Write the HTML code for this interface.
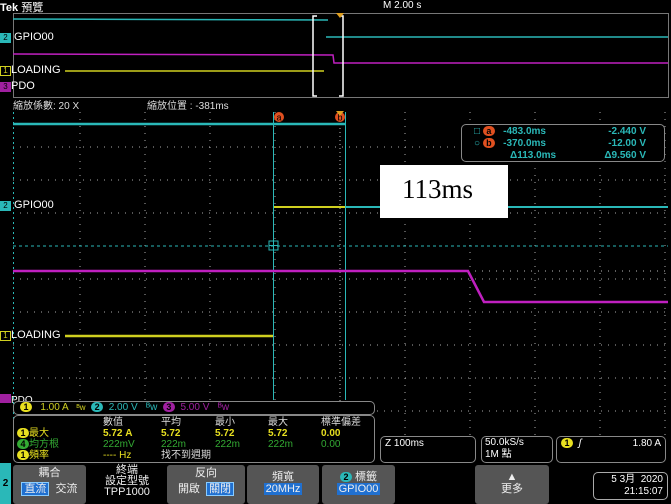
<!DOCTYPE html>
<html><head><meta charset="utf-8"><style>
*{margin:0;padding:0;box-sizing:border-box}
body{width:671px;height:504px;background:#000;position:relative;overflow:hidden;font-family:"Liberation Sans","Noto Sans CJK TC",sans-serif;color:#fff;font-size:10px}
.a{position:absolute;white-space:nowrap}
.btn{position:absolute;top:465px;height:39px;background:#555;border-radius:3px;text-align:center;font-size:11px;color:#eee;line-height:12px;padding-top:2px}
.box{position:absolute;border:1px solid #888;border-radius:5px}
.c{display:inline-block;width:12px;height:10px;border-radius:6px;text-align:center;line-height:10px;font-size:9px;font-weight:bold;color:#000}
</style></head><body>
<svg width="671" height="504" style="position:absolute;left:0;top:0">
<rect x="13.5" y="13.5" width="655" height="84" fill="none" stroke="#777"/>
<line x1="13" y1="19" x2="328" y2="20" stroke="#2ab8b8" stroke-width="1.5"/>
<line x1="326" y1="37" x2="668" y2="37" stroke="#2ab8b8" stroke-width="1.5"/>
<polyline points="13,54 333,55 334,63 668,63" fill="none" stroke="#c020c0" stroke-width="1.5"/>
<line x1="65" y1="71" x2="324" y2="71" stroke="#d0d020" stroke-width="1.5"/>
<polyline points="317,16 313,16 313,96 317,96" fill="none" stroke="#fff" stroke-width="1.5"/>
<polyline points="339,16 343,16 343,96 339,96" fill="none" stroke="#fff" stroke-width="1.5"/>
<polygon points="336,13 344,13 340,18" fill="#e0a020"/>
<g stroke="#aaa" stroke-width="1" stroke-dasharray="1,6">
<line x1="80" y1="112" x2="80" y2="440"/><line x1="145" y1="112" x2="145" y2="440"/><line x1="210" y1="112" x2="210" y2="440"/><line x1="275" y1="112" x2="275" y2="440"/><line x1="405" y1="112" x2="405" y2="440"/><line x1="470" y1="112" x2="470" y2="440"/><line x1="535" y1="112" x2="535" y2="440"/><line x1="600" y1="112" x2="600" y2="440"/><line x1="665" y1="112" x2="665" y2="440"/>
<line x1="13" y1="147" x2="668" y2="147"/><line x1="13" y1="180" x2="668" y2="180"/><line x1="13" y1="213" x2="668" y2="213"/><line x1="13" y1="279" x2="668" y2="279"/><line x1="13" y1="312" x2="668" y2="312"/><line x1="13" y1="345" x2="668" y2="345"/><line x1="13" y1="378" x2="668" y2="378"/><line x1="13" y1="411" x2="668" y2="411"/>
</g>
<line x1="340" y1="112" x2="340" y2="440" stroke="#bbb" stroke-dasharray="1,3"/>
<line x1="13" y1="271" x2="668" y2="271" stroke="#bbb" stroke-dasharray="1,6"/>
<line x1="13.5" y1="112" x2="13.5" y2="440" stroke="#2ab8b8" stroke-dasharray="2,3"/>
<line x1="13" y1="246" x2="668" y2="246" stroke="#2ab8b8" stroke-dasharray="3,3"/>
<line x1="273.5" y1="112" x2="273.5" y2="400" stroke="#2ab8b8"/>
<line x1="345.5" y1="112" x2="345.5" y2="400" stroke="#2ab8b8"/>
<rect x="269" y="241" width="9" height="9" fill="none" stroke="#2ab8b8"/>
<line x1="273.5" y1="241" x2="273.5" y2="250" stroke="#2ab8b8"/><line x1="269" y1="245.5" x2="278" y2="245.5" stroke="#2ab8b8"/>
<circle cx="279" cy="117" r="5" fill="#e05020"/><circle cx="340" cy="117" r="5" fill="#e05020"/>
<text x="279" y="120.5" font-size="9" fill="#000" text-anchor="middle" font-family="Liberation Sans">a</text>
<text x="340" y="120.5" font-size="9" fill="#000" text-anchor="middle" font-family="Liberation Sans">b</text>
<polygon points="336,111 344,111 340,116" fill="#e0a020"/>
<line x1="13" y1="124" x2="345" y2="124" stroke="#2ab8b8" stroke-width="2.5"/>
<line x1="274" y1="207" x2="345" y2="207" stroke="#d0d020" stroke-width="2"/>
<line x1="345" y1="207" x2="668" y2="207" stroke="#2ab8b8" stroke-width="2"/>
<polyline points="13,271 468,271 484,302 668,302" fill="none" stroke="#c020c0" stroke-width="2.5"/>
<line x1="65" y1="336" x2="273" y2="336" stroke="#d0d020" stroke-width="2.5"/>
</svg>
<div class="a" style="left:0;top:-1px;font-size:11px;font-weight:bold">Tek <span style="font-weight:normal">預覽</span></div>
<div class="a" style="left:383px;top:0;font-size:10px">M 2.00 s</div>
<div class="a" style="left:0;top:31px;font-size:11px"><span style="display:inline-block;width:11px;height:10px;background:#2ab8b8;color:#000;font-size:8px;text-align:center;line-height:10px">2</span> GPIO00</div>
<div class="a" style="left:0;top:64px;font-size:11px"><span style="display:inline-block;width:11px;height:10px;border:1px solid #d0d020;color:#d0d020;font-size:8px;text-align:center;line-height:8px">1</span>LOADING</div>
<div class="a" style="left:0;top:80px;font-size:11px"><span style="display:inline-block;width:11px;height:10px;background:#a020a0;color:#000;font-size:8px;text-align:center;line-height:10px">3</span>PDO</div>
<div class="a" style="left:13px;top:97px;font-size:10px;color:#ddd">縮放係數: 20 X</div>
<div class="a" style="left:147px;top:97px;font-size:10px;color:#ddd">縮放位置 : -381ms</div>
<div class="a" style="left:0;top:199px;font-size:11px"><span style="display:inline-block;width:11px;height:10px;background:#2ab8b8;color:#000;font-size:8px;text-align:center;line-height:10px">2</span> GPIO00</div>
<div class="a" style="left:0;top:329px;font-size:11px"><span style="display:inline-block;width:11px;height:10px;border:1px solid #d0d020;color:#d0d020;font-size:8px;text-align:center;line-height:8px">1</span>LOADING</div>
<div class="a" style="left:0;top:394px;font-size:10px"><span style="display:inline-block;width:11px;height:9px;background:#a020a0"></span>PDO</div>
<div class="box" style="left:461px;top:124px;width:204px;height:38px;background:#000;color:#2ab8b8;font-size:10px;font-weight:bold;line-height:12px;padding:1px 0 0 12px">
<div>□ <span class="c" style="background:#e05020">a</span> &nbsp;&nbsp;-483.0ms<span style="position:absolute;right:18px">-2.440 V</span></div>
<div>○ <span class="c" style="background:#e05020">b</span> &nbsp;&nbsp;-370.0ms<span style="position:absolute;right:18px">-12.00 V</span></div>
<div style="padding-left:36px">Δ113.0ms<span style="position:absolute;right:18px">Δ9.560 V</span></div>
</div>
<div class="a" style="left:380px;top:165px;width:128px;height:53px;background:#fff;color:#000;font-family:'Liberation Serif',serif;font-size:27px;padding:9px 0 0 22px">113ms</div>
<div class="box" style="left:13px;top:401px;width:362px;height:14px;background:#000;font-size:10px;line-height:12px;padding-left:6px;color:#d0d020"><span class="c" style="background:#e8e020">1</span>&nbsp;&nbsp; 1.00 A &nbsp;&nbsp;<span style="font-size:8px">ᴮw</span>&nbsp; <span class="c" style="background:#2ab8b8">2</span>&nbsp; <span style="color:#2ab8b8">2.00 V &nbsp;&nbsp;ᴮw</span>&nbsp; <span class="c" style="background:#a020a0">3</span>&nbsp; <span style="color:#a020a0">5.00 V &nbsp;&nbsp;ᴮw</span></div>
<div class="box" style="left:13px;top:415px;width:362px;height:48px;background:#000;font-size:10px;line-height:11px">
<div class="a" style="left:3px;top:12px;color:#e8e020"><span class="c" style="background:#e8e020">1</span>最大</div>
<div class="a" style="left:3px;top:23px;color:#3a3"><span class="c" style="background:#3a3">4</span>均方根</div>
<div class="a" style="left:3px;top:34px;color:#e8e020"><span class="c" style="background:#e8e020">1</span>頻率</div>
<div class="a" style="left:89px;top:1px;color:#ddd">數值<br><b style="color:#e8e020">5.72 A</b><br><span style="color:#3a3">222mV</span><br><span style="color:#e8e020">---- Hz</span></div>
<div class="a" style="left:147px;top:1px;color:#ddd">平均<br><b style="color:#e8e020">5.72</b><br><span style="color:#3a3">222m</span><br>找不到週期</div>
<div class="a" style="left:201px;top:1px;color:#ddd">最小<br><b style="color:#e8e020">5.72</b><br><span style="color:#3a3">222m</span></div>
<div class="a" style="left:254px;top:1px;color:#ddd">最大<br><b style="color:#e8e020">5.72</b><br><span style="color:#3a3">222m</span></div>
<div class="a" style="left:307px;top:1px;color:#ddd">標準偏差<br><b style="color:#e8e020">0.00</b><br><span style="color:#3a3">0.00</span></div>
</div>
<div class="box" style="left:380px;top:436px;width:96px;height:27px;background:#000;padding:1px 4px;font-size:10px">Z 100ms</div>
<div class="box" style="left:481px;top:436px;width:72px;height:27px;background:#000;padding:0 3px;font-size:10px;line-height:12px">50.0kS/s<br>1M 點</div>
<div class="box" style="left:556px;top:436px;width:110px;height:27px;background:#000;padding:1px 4px;font-size:10px"><span class="c" style="background:#e8e020">1</span> &nbsp;<i>ʃ</i><span style="position:absolute;right:4px">1.80 A</span></div>
<div class="a" style="left:0;top:463px;width:11px;height:41px;background:#2ab8b8;color:#000;font-size:10px;font-weight:bold;text-align:center;line-height:41px">2</div>
<div class="btn" style="left:13px;width:73px">耦合<div style="margin-top:4px"><span style="background:#2070d0;border:1px solid #8cf;padding:0 2px">直流</span> &nbsp;交流</div></div>
<div class="btn" style="left:88px;width:78px;background:#000;line-height:11px;padding-top:0">終端<br>設定型號<br>TPP1000</div>
<div class="btn" style="left:167px;width:78px">反向<div style="margin-top:4px">開啟 &nbsp;<span style="background:#2070d0;border:1px solid #8cf;padding:0 2px">關閉</span></div></div>
<div class="btn" style="left:247px;width:72px;padding-top:6px">頻寬<br><span style="background:#2070d0;padding:0 2px">20MHz</span></div>
<div class="btn" style="left:322px;width:73px;padding-top:6px"><span class="c" style="background:#2ab8b8">2</span> 標籤<br><span style="background:#2070d0;padding:0 2px">GPIO00</span></div>
<div class="btn" style="left:475px;width:74px;padding-top:6px">▲<br>更多</div>
<div class="box" style="left:593px;top:472px;width:75px;height:28px;border-color:#aaa;font-size:10px;line-height:12px;text-align:right;padding:1px 4px">5 3月 &nbsp;2020<br>21:15:07</div>
</body></html>
